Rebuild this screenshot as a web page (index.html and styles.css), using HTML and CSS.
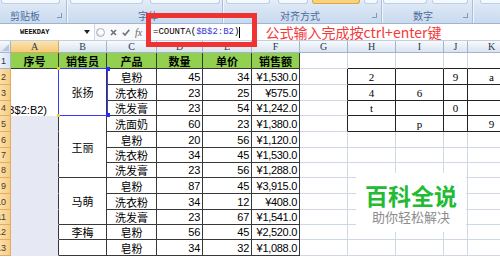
FILE: index.html
```html
<!DOCTYPE html>
<html lang="zh-CN">
<head>
    <meta charset="UTF-8">
    <title>COUNTA 序号</title>
    <link rel="stylesheet" href="styles.css">
</head>
<body>
    <div class="ribbon">
        <div class="grp g1">
            <div class="tops"><span class="pill p59"></span></div>
            <div class="strip"><span class="lbl">剪贴板</span><span class="launch"></span></div>
        </div>
        <div class="grp g2">
            <div class="tops"><span class="pill p73"></span><span class="pill p70"></span></div>
            <div class="strip"><span class="lbl">字体</span><span class="launch"></span></div>
        </div>
        <div class="grp g3">
            <div class="tops"><span class="pill p44"></span><span class="pill p30"></span><span class="pill p48 gold"></span><span class="pill p14"></span></div>
            <div class="strip"><span class="lbl">对齐方式</span><span class="launch"></span></div>
        </div>
        <div class="grp g4">
            <div class="tops"><span class="pill p44"></span><span class="pill p36"></span></div>
            <div class="strip"><span class="lbl">数字</span><span class="launch"></span></div>
        </div>
        <div class="grp g5">
            <div class="tops"><span class="pill p30"></span></div>
        </div>
    </div>

    <div class="fbar">
        <div class="namebox">
            <span>WEEKDAY</span>
            <svg width="6" height="4" viewBox="0 0 6 4"><path d="M0 0H6L3 4Z" fill="#222"/></svg>
        </div>
        <div class="fbtns">
            <span class="knob"></span>
            <svg width="7" height="7" viewBox="0 0 7 7"><path d="M1 1L6 6M6 1L1 6" stroke="#707070" stroke-width="1.6"/></svg>
            <svg width="8" height="7" viewBox="0 0 8 7"><path d="M0.8 3.8L3 6L7.3 0.8" stroke="#707070" stroke-width="1.6" fill="none"/></svg>
            <span class="fx">fx</span>
        </div>
        <div class="finput">
            <span>=COUNTA(<span class="ref">$B$2:B2</span>)</span><span class="caret"></span>
            <span class="note">公式输入完成按ctrl+enter键</span>
        </div>
    </div>

    <div class="sheet">
        <div class="corner"><svg width="9" height="9" viewBox="0 0 9 9"><path d="M8 1V8H1Z" fill="#b7c6da"/></svg></div>
        <div class="ch on">A</div><div class="ch">B</div><div class="ch">C</div><div class="ch">D</div><div class="ch">E</div><div class="ch">F</div><div class="ch">G</div><div class="ch">H</div><div class="ch">I</div><div class="ch">J</div><div class="ch">K</div>

        <div class="rh r1">1</div>
        <div class="hd">序号</div><div class="hd">销售员</div><div class="hd">产品</div><div class="hd">数量</div><div class="hd">单价</div><div class="hd">销售额</div>
        <div></div><div class="tt"></div><div class="tt"></div><div class="tt"></div><div class="tt"></div>

        <div class="rh">2</div>
        <div class="edit"><div class="clip"><span>=COUNTA($B$2:B2)</span></div></div>
        <div class="d m3">张扬</div>
        <div class="d">皂粉</div><div class="d n">45</div><div class="d n">34</div><div class="d n">¥1,530.0</div>
        <div class="tl"></div><div class="t">2</div><div class="t"></div><div class="t">9</div><div class="t">a</div>

        <div class="rh">3</div>
        <div class="d">洗衣粉</div><div class="d n">23</div><div class="d n">25</div><div class="d n">¥575.0</div>
        <div class="tl"></div><div class="t">4</div><div class="t">6</div><div class="t"></div><div class="t"></div>

        <div class="rh">4</div>
        <div class="d">洗发膏</div><div class="d n">23</div><div class="d n">54</div><div class="d n">¥1,242.0</div>
        <div class="tl"></div><div class="t">t</div><div class="t"></div><div class="t">0</div><div class="t"></div>

        <div class="rh">5</div>
        <div class="sel"></div>
        <div class="d m4">王丽</div>
        <div class="d">洗面奶</div><div class="d n">60</div><div class="d n">23</div><div class="d n">¥1,380.0</div>
        <div class="tl"></div><div class="t"></div><div class="t">p</div><div class="t"></div><div class="t">9</div>

        <div class="rh">6</div>
        <div class="sel"></div>
        <div class="d">皂粉</div><div class="d n">20</div><div class="d n">56</div><div class="d n">¥1,120.0</div>
        <div></div><div></div><div></div><div></div><div></div>

        <div class="rh">7</div>
        <div class="sel"></div>
        <div class="d">洗衣粉</div><div class="d n">34</div><div class="d n">45</div><div class="d n">¥1,530.0</div>
        <div></div><div></div><div></div><div></div><div></div>

        <div class="rh">8</div>
        <div class="sel"></div>
        <div class="d">洗发膏</div><div class="d n">23</div><div class="d n">56</div><div class="d n">¥1,288.0</div>
        <div></div><div></div><div></div><div></div><div></div>

        <div class="rh">9</div>
        <div class="sel"></div>
        <div class="d m3">马萌</div>
        <div class="d">皂粉</div><div class="d n">87</div><div class="d n">45</div><div class="d n">¥3,915.0</div>
        <div></div><div></div><div></div><div></div><div></div>

        <div class="rh">10</div>
        <div class="sel"></div>
        <div class="d">洗衣粉</div><div class="d n">34</div><div class="d n">12</div><div class="d n">¥408.0</div>
        <div></div><div></div><div></div><div></div><div></div>

        <div class="rh">11</div>
        <div class="sel"></div>
        <div class="d">洗发膏</div><div class="d n">23</div><div class="d n">67</div><div class="d n">¥1,541.0</div>
        <div></div><div></div><div></div><div></div><div></div>

        <div class="rh">12</div>
        <div class="sel"></div>
        <div class="d">李梅</div>
        <div class="d">皂粉</div><div class="d n">56</div><div class="d n">45</div><div class="d n">¥2,520.0</div>
        <div></div><div></div><div></div><div></div><div></div>

        <div class="rh">13</div>
        <div class="sel"></div>
        <div class="d"></div>
        <div class="d">皂粉</div><div class="d n">34</div><div class="d n">32</div><div class="d n">¥1,088.0</div>
        <div></div><div></div><div></div><div></div><div></div>
    </div>

    <!-- range highlight for B2 while editing -->
    <div class="range">
        <span class="hdl tl-h"></span><span class="hdl bl-h"></span>
        <span class="hdl tr-h"></span><span class="hdl br-h"></span>
    </div>

    <div class="redbox"></div>

    <div class="wm">
        <div class="wm-t">百科全说</div>
        <div class="wm-s">助你轻松解决</div>
    </div>
</body>
</html>
```

FILE: styles.css
```css
body {
    margin: 0;
    width: 500px;
    height: 257px;
    overflow: hidden;
    position: relative;
    background: #fff;
    font-family: "Liberation Sans", "Noto Sans CJK SC", sans-serif;
}

/* ribbon */
.ribbon {
    display: flex;
    height: 24px;
    box-sizing: border-box;
    border-bottom: 1px solid #9fb5d1;
    background: linear-gradient(#e3ecf8, #d6e3f3 45%, #c9daef);
    overflow: hidden;
}
.grp {
    display: flex;
    flex-direction: column;
    flex-shrink: 0;
    box-sizing: border-box;
    border-right: 1px solid #a9bfdb;
    box-shadow: 1px 0 0 #f1f6fc;
}
.g1 { width: 67px; }
.g2 { width: 156px; }
.g3 { width: 159px; }
.g4 { width: 91px; }
.g5 { width: 40px; border-right: none; }
.tops {
    height: 7px;
    display: flex;
    align-items: flex-start;
}
.pill {
    height: 4px;
    box-sizing: border-box;
    background: #f5f8fd;
    border: 1px solid #bccfe6;
    border-top: none;
    border-radius: 0 0 3px 3px;
}
.pill.gold {
    background: #f8d37c;
    border-color: #d9a646;
}
.g1 .pill { margin-left: 1px; }
.g2 .pill { margin-left: 3px; }
.g2 .pill + .pill { margin-left: 7px; }
.g3 .pill { margin-left: 3px; }
.g3 .pill + .pill { margin-left: 8px; }
.g3 .pill + .pill + .pill { margin-left: 4px; }
.g4 .pill { margin-left: 1px; }
.g4 .pill + .pill { margin-left: 5px; }
.g5 .pill { margin-left: 7px; }
.p59 { width: 59px; }
.p73 { width: 73px; }
.p70 { width: 70px; }
.p44 { width: 44px; }
.p30 { width: 30px; }
.p48 { width: 48px; }
.p14 { width: 14px; }
.p36 { width: 36px; }
.strip {
    flex: 1;
    display: flex;
    align-items: center;
    font-size: 10px;
    color: #4d6c9a;
}
.g1 .lbl { margin-left: 10px; }
.g2 .lbl { margin-left: 71px; }
.g3 .lbl { margin-left: 57px; }
.g4 .lbl { margin-left: 31px; }
.launch {
    margin-left: auto;
    margin-right: 4px;
    width: 4px;
    height: 4px;
    border-right: 1px solid #8098b8;
    border-bottom: 1px solid #8098b8;
}

/* formula bar */
.fbar {
    display: flex;
    height: 17px;
    box-sizing: border-box;
    border-bottom: 1px solid #c3cfdf;
    background: #fff;
}
.namebox {
    width: 95px;
    box-sizing: border-box;
    display: flex;
    align-items: center;
    justify-content: space-between;
    padding: 0 4px 0 20px;
    border-right: 1px solid #ccd7e5;
    font: bold 7px "Liberation Mono", monospace;
    color: #111;
}
.fbtns {
    width: 52px;
    box-sizing: border-box;
    display: flex;
    align-items: center;
    padding-left: 1px;
    gap: 5px;
    background: #f7f9fc;
    border-right: 1px solid #d5dde8;
}
.knob {
    width: 9px;
    height: 9px;
    box-sizing: border-box;
    border-radius: 50%;
    border: 1px solid #a9b1bd;
    background: radial-gradient(circle at 60% 40%, #fff 30%, #c8ced7);
}
.fx {
    font: italic 10px "Liberation Serif", serif;
    color: #666;
}
.finput {
    display: flex;
    align-items: center;
    padding-left: 6px;
    font: 9px "Liberation Mono", monospace;
    color: #000;
    white-space: nowrap;
}
.ref {
    color: #3535d0;
}
.caret {
    width: 1px;
    height: 11px;
    background: #000;
}
.note {
    margin-left: 25px;
    font: 14px/16px "Noto Sans CJK SC", sans-serif;
    color: #f33a3a;
}

/* sheet grid */
.sheet {
    display: grid;
    grid-template-columns: 11px 48px 48px 50px 46px 49px 48px 48px 48px 48px 24px 48px;
    grid-template-rows: 12px 16px 16px 16px 15px 16px 16px 15px 15px 16px 16px 15px 15px 16px;
    width: 516px;
}
.sheet > div {
    box-sizing: border-box;
    border-right: 1px solid #d0d7e5;
    border-bottom: 1px solid #d0d7e5;
    display: flex;
    align-items: center;
    justify-content: center;
    font-size: 11px;
    white-space: nowrap;
    overflow: hidden;
    color: #000;
}
.sheet > .corner {
    background: linear-gradient(#f7f9fc, #dce5f1);
    border-color: #9eb6ce;
    align-items: flex-end;
    justify-content: flex-end;
}
.sheet > .ch {
    background: linear-gradient(#f7f9fc, #dbe4f1);
    border-color: #9eb6ce;
    font: 10px "Liberation Serif", serif;
    color: #27384e;
}
.sheet > .ch.on {
    background: linear-gradient(#fbe3b1, #f6c979);
    border-color: #d9a75a;
}
.sheet > .rh {
    background: linear-gradient(to right, #fbdfa9, #f7cc83);
    border-color: #e1ad60;
    font-size: 9px;
    color: #4d3a1c;
    justify-content: flex-end;
    padding-right: 4px;
}
.sheet > .rh.r1 {
    background: linear-gradient(to right, #edf2f9, #dbe4f1);
    border-color: #9eb6ce;
    color: #27384e;
}
.sheet > .hd {
    background: #92d050;
    border-color: #383838;
    font-weight: bold;
}
.sheet > .d {
    border-color: #383838;
}
.sheet > .n {
    justify-content: flex-end;
    padding-right: 2px;
    letter-spacing: -0.3px;
}
.m3 { grid-row: span 3; }
.m4 { grid-row: span 4; }
.sheet > .edit {
    grid-row: span 3;
    border-bottom: none;
    border-right-color: #383838;
    align-items: flex-end;
    justify-content: flex-start;
    padding-right: 11px;
}
.clip {
    width: 36px;
    overflow: hidden;
    direction: rtl;
    line-height: 12px;
}
.clip span {
    direction: ltr;
    unicode-bidi: isolate;
}
.sheet > .sel {
    background: #e6e9f4;
    border-bottom-color: #e6e9f4;
    border-right-color: #383838;
}
.sheet > .t {
    border-color: #222;
    font: 11px "Liberation Serif", serif;
}
.sheet > .tt {
    border-bottom-color: #222;
}
.sheet > .tl {
    border-right-color: #222;
}

/* overlays */
.range {
    position: absolute;
    left: 58px;
    top: 68px;
    width: 50px;
    height: 48px;
    box-sizing: border-box;
    border: 1px solid #3a3aff;
}
.hdl {
    position: absolute;
    width: 4px;
    height: 4px;
    background: #2a2af0;
}
.tl-h, .bl-h {
    left: -2px;
    background: #e8d23a;
    width: 3px;
    height: 3px;
}
.tr-h, .br-h { right: -3px; }
.tl-h, .tr-h { top: -2px; }
.bl-h, .br-h { bottom: -2px; }
.redbox {
    position: absolute;
    left: 146px;
    top: 13px;
    width: 111px;
    height: 34px;
    box-sizing: border-box;
    border: 5px solid #f03232;
}
.wm {
    position: absolute;
    left: 356px;
    top: 173px;
    width: 110px;
    height: 59px;
    box-sizing: border-box;
    padding-top: 10px;
    background: #fff;
    display: flex;
    flex-direction: column;
    align-items: center;
    font-family: "Noto Sans CJK SC", sans-serif;
}
.wm-t {
    font-size: 23px;
    line-height: 24px;
    font-weight: bold;
    color: #22bb33;
}
.wm-s {
    margin-top: 3px;
    font-size: 13px;
    line-height: 14px;
    color: #8c8c8c;
}
```
